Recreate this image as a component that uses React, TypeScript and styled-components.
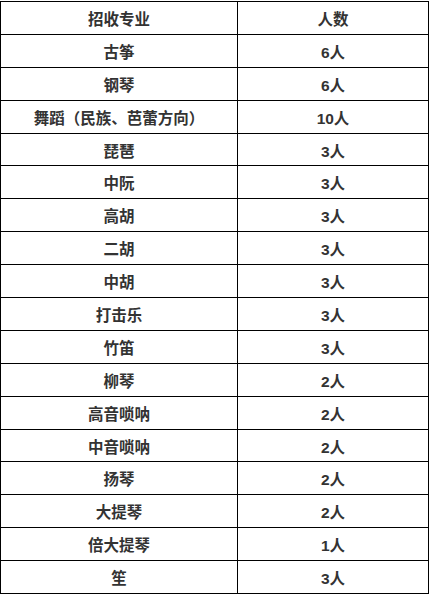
import { Fragment } from "react";
import styled, { createGlobalStyle } from "styled-components";

const rows: [string, string][] = [
  ["古筝", "6人"],
  ["钢琴", "6人"],
  ["舞蹈（民族、芭蕾方向）", "10人"],
  ["琵琶", "3人"],
  ["中阮", "3人"],
  ["高胡", "3人"],
  ["二胡", "3人"],
  ["中胡", "3人"],
  ["打击乐", "3人"],
  ["竹笛", "3人"],
  ["柳琴", "2人"],
  ["高音唢呐", "2人"],
  ["中音唢呐", "2人"],
  ["扬琴", "2人"],
  ["大提琴", "2人"],
  ["倍大提琴", "1人"],
  ["笙", "3人"],
];

const GlobalStyle = createGlobalStyle`
  body {
    margin: 0;
    background: #fff;
    font-family: "Liberation Sans", "Noto Sans CJK SC", sans-serif;
  }
`;

const Page = styled.div`
  width: 429px;
  height: 595px;
  padding-top: 1px;
  box-sizing: border-box;
  overflow: hidden;
`;

const Table = styled.div`
  display: grid;
  grid-template-columns: 237px 191px;
  grid-auto-rows: 32.9px;
  border-top: 1px solid #000;
  border-left: 1px solid #000;
  width: 429px;
  box-sizing: border-box;
`;

const Cell = styled.div`
  display: flex;
  align-items: center;
  justify-content: center;
  border-right: 1px solid #000;
  border-bottom: 1px solid #000;
  font-size: 15.5px;
  font-weight: bold;
  color: #333;
  white-space: nowrap;
`;

export default function App() {
  return (
    <Page>
      <GlobalStyle />
      <Table>
        <Cell>招收专业</Cell>
        <Cell>人数</Cell>
        {rows.map(([name, count]) => (
          <Fragment key={name}>
            <Cell>{name}</Cell>
            <Cell>{count}</Cell>
          </Fragment>
        ))}
      </Table>
    </Page>
  );
}
